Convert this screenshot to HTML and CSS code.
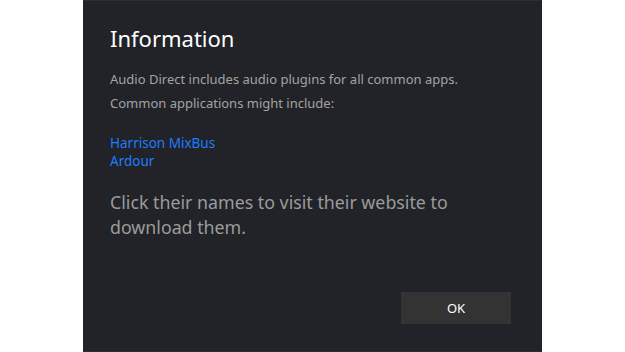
FILE: index.html
```html
<!DOCTYPE html>
<html lang="en">
<head>
  <meta charset="UTF-8" />
  <title>Information</title>
  <link rel="stylesheet" href="styles.css">
</head>
<body>
  <div class="dialog">
    <h1 class="dialog-title">Information</h1>
    <p class="intro">Audio Direct includes audio plugins for all common apps.<br>Common applications might include:</p>
    <div class="app-links">
      <a href="#">Harrison MixBus</a>
      <a href="#">Ardour</a>
    </div>
    <p class="hint">Click their names to visit their website to download them.</p>
    <div class="dialog-actions">
      <button class="ok-button">OK</button>
    </div>
  </div>
</body>
</html>
```

FILE: styles.css
```css
html, body {
  height: 100%;
  margin: 0;
}
body {
  background: #ffffff;
  display: flex;
  justify-content: center;
  font-family: 'Noto Sans', 'Open Sans', sans-serif;
}
.dialog {
  width: 459px;
  box-sizing: border-box;
  background: #212328;
  border-top: 1px solid #2c2e33;
  border-bottom: 1px solid #2c2e33;
  padding: 22px 31px 27px 27px;
  display: flex;
  flex-direction: column;
}
.dialog-title {
  margin: 0;
  font-size: 22px;
  font-weight: 400;
  line-height: 30px;
  color: #ffffff;
}
.intro {
  margin: 14px 0 0;
  font-size: 13px;
  line-height: 24px;
  color: #a3a3a3;
}
.app-links {
  margin-top: 19px;
  display: flex;
  flex-direction: column;
  align-items: flex-start;
}
.app-links a {
  font-size: 13.5px;
  line-height: 18px;
  color: #1f7bff;
  text-decoration: none;
}
.hint {
  margin: 20px 0 0;
  width: 350px;
  font-size: 17.8px;
  line-height: 25px;
  color: #9b9b9b;
}
.dialog-actions {
  margin-top: auto;
  display: flex;
  justify-content: flex-end;
}
.ok-button {
  width: 110px;
  height: 32px;
  border: none;
  background: #333333;
  color: #ffffff;
  font-family: inherit;
  font-size: 13px;
}
```
